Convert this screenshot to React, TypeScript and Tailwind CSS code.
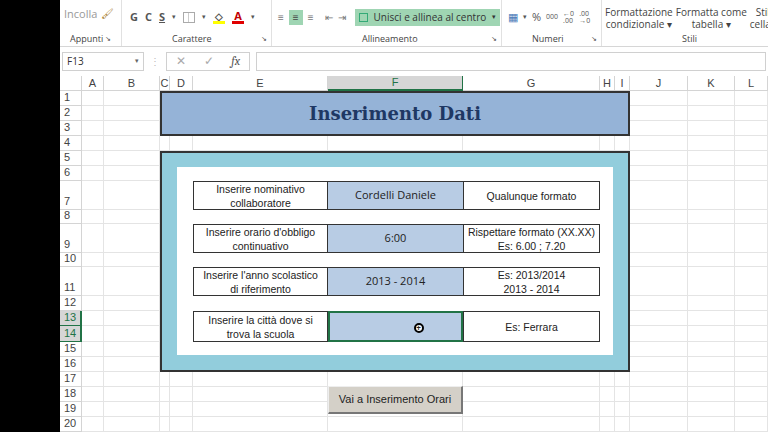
import React from "react";

const cols = ["A","B","C","D","E","F","G","H","I","J","K","L"];
const rowH = [15,15,15,15,15,15,29,14,29,14,29,15,15,16,15,15,15,15,15,15];

export default function App() {
  const f = { fontFamily: '"Segoe UI","Open Sans","Liberation Sans",sans-serif' };
  const a = { fontFamily: '"Liberation Sans",Arial,sans-serif' };
  return (
    <div className="w-[768px] h-[432px] overflow-hidden bg-white flex" style={f}>
      <div className="w-[60px] h-full bg-black shrink-0" />
      <div className="flex-1 flex flex-col min-w-0">
        {/* Ribbon */}
        <div className="h-[47px] bg-white border-b border-[#d6d6d6] flex text-[10px] text-[#444] relative">
          <div className="w-[62px] shrink-0 border-r border-[#e1e1e1] flex flex-col">
            <div className="flex-1 flex items-start pt-[6px] pl-[4px] gap-[4px]">
              <span className="text-[#999] text-[11px]">Incolla</span>
              <span className="text-[#a57b2a]">🖌</span>
            </div>
            <div className="h-[14px] flex items-center justify-between px-[10px] text-[9px]"><span>Appunti</span><span className="text-[7px]">↘</span></div>
          </div>
          <div className="w-[150px] shrink-0 border-r border-[#e1e1e1] flex flex-col">
            <div className="flex-1 flex items-center gap-[7px] pl-[8px] pt-[2px] text-[11px] font-bold text-[#555]">
              <span>G</span><span>C</span><span className="underline">S</span><span className="text-[7px] font-normal">▾</span>
              <span className="w-[12px] h-[11px] border border-[#aaa] grid grid-cols-2"><span className="border-r border-[#ccc]"/></span><span className="text-[7px] font-normal">▾</span>
              <span className="flex flex-col items-center leading-[10px]"><span className="text-[10px]">◇</span><span className="w-[12px] h-[3px] bg-[#ffff00]"/></span>
              <span className="flex flex-col items-center leading-[10px]"><span className="text-[#c00000]">A</span><span className="w-[12px] h-[3px] bg-[#e00000]"/></span><span className="text-[7px] font-normal">▾</span>
            </div>
            <div className="h-[14px] flex items-center justify-between pl-[50px] pr-[4px] text-[9px]"><span>Carattere</span><span className="text-[7px]">↘</span></div>
          </div>
          <div className="w-[230px] shrink-0 border-r border-[#e1e1e1] flex flex-col">
            <div className="flex-1 flex items-center gap-[5px] pl-[6px] pt-[2px] text-[10px] text-[#777]">
              <span>≡</span><span className="bg-[#9fd5b3] px-[4px] text-[#444]">≡</span><span>≡</span><span className="ml-[6px]">⇤</span><span>⇥</span>
              <span className="ml-[4px] bg-[#9fd5b3] h-[17px] flex items-center px-[4px] gap-[6px] text-[#333] text-[10px] whitespace-nowrap"><span className="border border-[#3a7] w-[9px] h-[9px]" />Unisci e allinea al centro <span className="text-[7px]">▾</span></span>
            </div>
            <div className="h-[14px] flex items-center justify-between pl-[90px] pr-[4px] text-[9px]"><span>Allineamento</span><span className="text-[7px]">↘</span></div>
          </div>
          <div className="w-[100px] shrink-0 border-r border-[#e1e1e1] flex flex-col">
            <div className="flex-1 flex items-center gap-[5px] pl-[6px] pt-[2px] text-[11px] text-[#555]">
              <span className="text-[#4a7ab8]">▦</span><span className="text-[7px]">▾</span><span>%</span><span className="text-[7px]">000</span><span className="text-[7px] leading-[7px]">←0<br/>.00</span><span className="text-[7px] leading-[7px]">.00<br/>→0</span>
            </div>
            <div className="h-[14px] flex items-center justify-between pl-[30px] pr-[4px] text-[9px]"><span>Numeri</span><span className="text-[7px]">↘</span></div>
          </div>
          <div className="flex-1 flex flex-col min-w-0">
            <div className="flex-1 flex items-end gap-[3px] pl-[3px] text-[10px] leading-[12px] text-[#444] pb-[2px] whitespace-nowrap">
              <span className="text-center">Formattazione<br/>condizionale ▾</span>
              <span className="text-center">Formatta come<br/>tabella ▾</span>
              <span className="text-center">Stili<br/>cella ▾</span>
            </div>
            <div className="h-[14px] flex items-center pl-[80px] text-[9px]">Stili</div>
          </div>
        </div>
        {/* formula bar */}
        <div className="h-[28px] flex items-center gap-[6px] px-[2px] text-[10px] text-[#333]">
          <div className="w-[82px] h-[19px] border border-[#d0d0d0] flex items-center justify-between px-[4px]"><span>F13</span><span className="text-[7px] text-[#666]">▾</span></div>
          <span className="text-[#bbb]">⋮</span>
          <div className="w-[84px] h-[19px] border border-[#d0d0d0] flex items-center justify-around text-[#aaa] text-[12px]"><span>✕</span><span>✓</span><span className="italic text-[#555] font-serif">fx</span></div>
          <div className="flex-1 h-[19px] border border-[#d0d0d0]" />
        </div>
        {/* sheet */}
        <div className="grid mt-[1px]" style={{ ...a, gridTemplateColumns: "22px 22px 56px 10px 23px 135px 135px 137px 15px 15px 58px 47px 33px", gridTemplateRows: "15px " + rowH.map(h => h + "px").join(" ") }}>
          <div className="border-r border-b border-[#d4d4d4] col-start-1 row-start-1" />
          {cols.map((c, i) => (
            <div key={c} className={`row-start-1 border-r border-b flex items-center justify-center text-[11px] ${c === "F" ? "bg-[#d6d6d6] text-[#217346] border-b-2 border-b-[#217346]" : "border-[#d4d4d4] text-[#444]"}`} style={{ gridColumn: i + 2 }}>{c}</div>
          ))}
          {rowH.map((_, r) => (
            <React.Fragment key={r}>
              <div className={`col-start-1 border-r border-b flex items-end justify-start pl-[4px] text-[11px] ${r === 12 || r === 13 ? "bg-[#d6d6d6] text-[#217346] border-r-2 border-r-[#217346]" : "border-[#d4d4d4] text-[#444]"}`} style={{ gridRow: r + 2 }}>{r + 1}</div>
              {cols.map((c, i) => (
                <div key={c} className="border-r border-b border-[#e4e4e4]" style={{ gridRow: r + 2, gridColumn: i + 2 }} />
              ))}
            </React.Fragment>
          ))}
          {/* title */}
          <div className="col-[4/11] row-[2/5] bg-[#95b3d7] border-2 border-[#333] flex items-center justify-center text-[18px] font-bold text-[#1f3864]" style={{ fontFamily: '"DejaVu Serif","Liberation Serif",serif' }}>Inserimento Dati</div>
          {/* teal */}
          <div className="col-[4/11] row-[6/18] bg-[#92cddc] border-2 border-[#333] px-[15px] pt-[14px] pb-[15px] flex">
            <div className="flex-1 bg-white" />
          </div>
          {[
            [8, 9, "Inserire nominativo collaboratore", "Cordelli Daniele", "Qualunque formato"],
            [10, 11, "Inserire orario d'obbligo continuativo", "6:00", "Rispettare formato  (XX.XX)\nEs: 6.00 ;  7.20"],
            [12, 13, "Inserire l'anno scolastico di riferimento", "2013 - 2014", "Es: 2013/2014\n2013 - 2014"],
            [14, 16, "Inserire la città dove si trova la scuola", "", "Es: Ferrara"],
          ].map(([rs, re, l, m, rr], k) => (
            <React.Fragment key={k}>
              <div className="col-start-6 border border-[#333] bg-white flex items-center justify-center text-center text-[10.5px] leading-[14px] text-[#222] px-[8px]" style={{ gridRow: `${rs}/${re}` }}>{l}</div>
              <div className={`col-start-7 bg-[#b8cce4] flex items-center justify-center text-[11px] text-[#222] ${k === 3 ? "border-2 border-[#217346]" : "border-y border-[#333]"}`} style={{ gridRow: `${rs}/${re}`, ...f }}>
                {k === 3 ? <span className="ml-[46px] mt-[2px] w-[10px] h-[10px] rounded-full bg-white border-2 border-black text-[8px] leading-[6px] flex items-center justify-center font-bold">+</span> : m}
              </div>
              <div className="col-start-8 border border-[#333] bg-white flex items-center justify-center text-center text-[10.5px] leading-[14px] text-[#222] whitespace-pre-line" style={{ gridRow: `${rs}/${re}` }}>{rr}</div>
            </React.Fragment>
          ))}
          <div className="col-start-7 row-[19/21] self-start mt-[-1px] h-[28px] bg-[#d4d0c8] border-r-2 border-b-2 border-[#777] border-l border-t border-l-[#eee] border-t-[#eee] flex items-center justify-center text-[11px] text-[#222]">Vai a Inserimento Orari</div>
        </div>
      </div>
    </div>
  );
}
